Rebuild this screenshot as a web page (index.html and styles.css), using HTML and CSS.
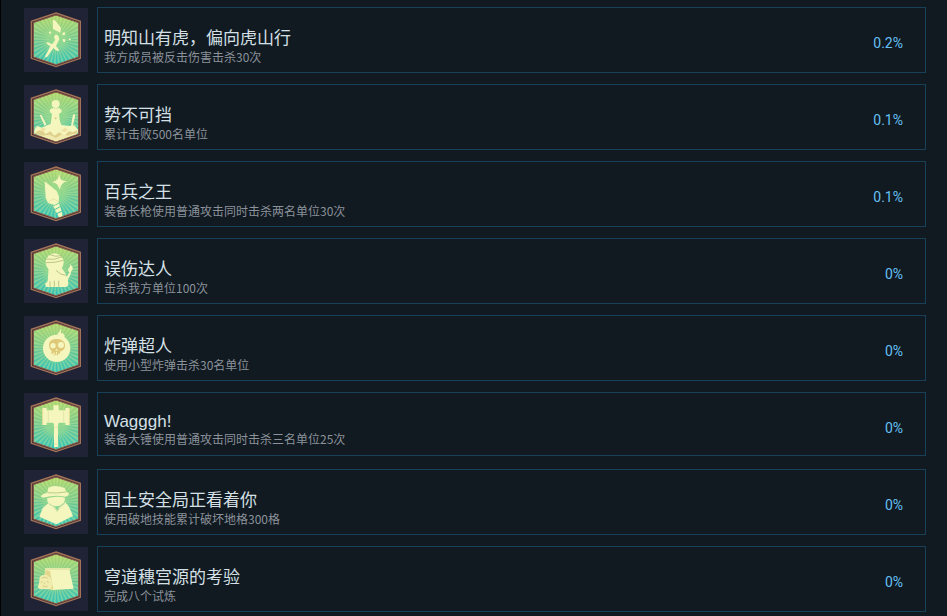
FILE: index.html
```
<!DOCTYPE html>
<html lang="zh-CN">
<head>
  <meta charset="UTF-8">
  <meta name="viewport" content="width=device-width, initial-scale=1.0">
  <title>全球成就</title>
  <link rel="stylesheet" href="styles.css">
</head>
<body>
  <!-- shared badge background -->
  <svg class="defs" aria-hidden="true">
    <defs>
      <linearGradient id="sky" x1="0" y1="0" x2="0" y2="1">
        <stop offset="0" stop-color="#b4d868"/>
        <stop offset="0.5" stop-color="#70c893"/>
        <stop offset="1" stop-color="#2fc4bb"/>
      </linearGradient>
      <radialGradient id="glow">
        <stop offset="0" stop-color="#b4e88c" stop-opacity="0.7"/>
        <stop offset="1" stop-color="#b4e88c" stop-opacity="0"/>
      </radialGradient>
      <clipPath id="hex"><path d="M108 34L175 56V158L108 182L41 158V56Z"/></clipPath>
      <symbol id="badge" viewBox="12 12 192 192">
        <path d="M108 27L181 52V163L108 188L34 163V52Z" fill="#4a3033" stroke="#a37458" stroke-width="4"/>
        <g clip-path="url(#hex)">
          <rect x="38" y="30" width="140" height="156" fill="url(#sky)"/>
          <circle cx="108" cy="108" r="55" pathLength="72" fill="none" stroke="#d3ee9c" stroke-opacity="0.35" stroke-width="70" stroke-dasharray="1 1"/>
          <circle cx="108" cy="108" r="46" fill="url(#glow)"/>
        </g>
        <path d="M108 33L176 56V159L108 182L40 159V56Z" fill="none" stroke="#8d604b" stroke-width="3"/>
      </symbol>
    </defs>
  </svg>

  <main class="achievements">
    <div class="achieve-row">
      <svg class="achieve-icon" viewBox="12 12 192 192" aria-hidden="true">
        <use href="#badge" x="12" y="12" width="192" height="192"/>
        <g fill="#f5f6bd">
          <path d="M98 48L105 49L123 71L121 86L99 75Z"/>
          <path d="M107 91L115 95L118 106L108 126L117 137L115 142L108 139L100 132L82 158L75 161L77 153L91 127L80 119L81 114L88 116L96 121L106 108L102 99Z"/>
          <path d="M128 86L136 85L134 94L127 93ZM128 105L136 106L135 115L129 113ZM89 82L94 84L91 90L86 87ZM148 103L153 105L150 109L146 107Z"/>
        </g>
      </svg>
      <div class="achieve-box">
        <div class="achieve-text">
          <h3>明知山有虎，偏向虎山行</h3>
          <p>我方成员被反击伤害击杀30次</p>
        </div>
        <div class="achieve-percent">0.2%</div>
      </div>
    </div>

    <div class="achieve-row">
      <svg class="achieve-icon" viewBox="12 12 192 192" aria-hidden="true">
        <use href="#badge" x="12" y="12" width="192" height="192"/>
        <g fill="#f5f6bd">
          <circle cx="107" cy="69" r="12"/>
          <path d="M95 82H119L125 88L124 94L117 99L119 117L124 132L150 135L163 133L174 146L173 157L108 181L43 157L43 147L51 135L66 140L81 133L92 129L96 99L90 94L89 87Z"/>
          <path d="M59 102L64 101L79 130L74 134ZM159 101L164 99L165 107L158 136L153 134Z"/>
        </g>
        <path d="M44 157L56 148L70 151L77 159L91 151L103 164L118 154L133 164L147 150L158 154L171 148V158L108 180Z" fill="#dfd18d"/>
        <path d="M60 147L67 140L78 143L72 150ZM123 150L134 141L143 144L136 153Z" fill="#f0dfa0"/>
        <path d="M43 158L108 181L173 158L160 158L144 164L126 160L108 171L88 161L66 164Z" fill="#f1eaaf"/>
        <circle cx="107" cy="112" r="3" fill="#d5cf85"/>
      </svg>
      <div class="achieve-box">
        <div class="achieve-text">
          <h3>势不可挡</h3>
          <p>累计击败500名单位</p>
        </div>
        <div class="achieve-percent">0.1%</div>
      </div>
    </div>

    <div class="achieve-row">
      <svg class="achieve-icon" viewBox="12 12 192 192" aria-hidden="true">
        <use href="#badge" x="12" y="12" width="192" height="192"/>
        <g fill="#f5f6bd">
          <path d="M117 44Q119 61 124 65Q130 69 141 70Q131 72 127 77Q122 82 119 95Q115 84 111 79Q106 74 96 73Q109 68 112 64Q116 59 117 44Z"/>
          <path d="M74 70L110 99L117 116L116 134L103 141L84 135L77 119Z"/>
          <path d="M100 145L117 137L120 145L104 153ZM105 156L121 148L124 158L110 165ZM112 168L125 161L127 175L117 178Z"/>
        </g>
        <path d="M86 132L99 122L115 130" fill="none" stroke="#dadc92" stroke-width="2"/>
      </svg>
      <div class="achieve-box">
        <div class="achieve-text">
          <h3>百兵之王</h3>
          <p>装备长枪使用普通攻击同时击杀两名单位30次</p>
        </div>
        <div class="achieve-percent">0.1%</div>
      </div>
    </div>

    <div class="achieve-row">
      <svg class="achieve-icon" viewBox="12 12 192 192" aria-hidden="true">
        <use href="#badge" x="12" y="12" width="192" height="192"/>
        <g fill="#f5f6bd">
          <circle cx="104" cy="82" r="27"/>
          <path d="M86 99L125 99L136 115L144 134L145 151L138 156H78L75 147L83 139Z"/>
          <path d="M137 132L148 112L143 104L149 96L151 88L156 94L159 101L153 110L152 118L142 137Z"/>
        </g>
        <g fill="none" stroke="#9aaf69" stroke-width="2">
          <path d="M79 72Q103 77 127 65M78 83Q104 84 130 76M89 59Q106 67 124 62"/>
          <path d="M108 106Q121 121 139 121"/>
          <path d="M90 139V155M103 137V155M116 137V155"/>
        </g>
      </svg>
      <div class="achieve-box">
        <div class="achieve-text">
          <h3>误伤达人</h3>
          <p>击杀我方单位100次</p>
        </div>
        <div class="achieve-percent">0%</div>
      </div>
    </div>

    <div class="achieve-row">
      <svg class="achieve-icon" viewBox="12 12 192 192" aria-hidden="true">
        <use href="#badge" x="12" y="12" width="192" height="192"/>
        <circle cx="110" cy="109" r="41" fill="#f5f6bd"/>
        <path d="M113 67L115 61L131 65L134 72L132 80L112 74Z" fill="#f5f6bd"/>
        <path d="M122 65L120 58L124 53" fill="none" stroke="#f5f6bd" stroke-width="4"/>
        <path d="M87 96Q89 82 107 81Q128 80 134 94Q138 105 130 114L120 119V126L115 124L113 131L108 127L103 132L100 124L94 126L95 117Q86 110 87 96Z" fill="#dfc878"/>
        <circle cx="99" cy="101" r="8" fill="#f5f6bd"/>
        <circle cx="123" cy="99" r="9" fill="#f5f6bd"/>
        <path d="M110 110L114 116H106ZM101 121H104V128H101ZM108 120H111V126H108Z" fill="#f5f6bd"/>
      </svg>
      <div class="achieve-box">
        <div class="achieve-text">
          <h3>炸弹超人</h3>
          <p>使用小型炸弹击杀30名单位</p>
        </div>
        <div class="achieve-percent">0%</div>
      </div>
    </div>

    <div class="achieve-row">
      <svg class="achieve-icon" viewBox="12 12 192 192" aria-hidden="true">
        <use href="#badge" x="12" y="12" width="192" height="192"/>
        <g fill="#f5f6bd">
          <path d="M67 57H80V108H67ZM136 57H149V108H136ZM80 64H136V101H80Z"/>
          <path d="M100 49H116V104H100ZM102 104H114V174H102Z"/>
        </g>
        <path d="M85 66V99M131 66V99M102 115H114M102 165H114" stroke="#dbdda0" stroke-width="2"/>
        <path d="M68 58V107M148 58V107" stroke="#e3d994" stroke-width="2"/>
      </svg>
      <div class="achieve-box">
        <div class="achieve-text">
          <h3 class="latin">Wagggh!</h3>
          <p>装备大锤使用普通攻击同时击杀三名单位25次</p>
        </div>
        <div class="achieve-percent">0%</div>
      </div>
    </div>

    <div class="achieve-row">
      <svg class="achieve-icon" viewBox="12 12 192 192" aria-hidden="true">
        <use href="#badge" x="12" y="12" width="192" height="192"/>
        <g fill="#f5f6bd">
          <path d="M82 80L85 65Q103 54 134 66L139 78L147 82Q147 90 136 92Q103 85 70 95L62 92Q65 83 82 80Z"/>
          <path d="M81 97Q108 88 135 95L133 109L120 119L107 121L92 117L83 108Z"/>
          <path d="M86 111L104 122L112 134L117 124L136 109L147 122L159 150L109 175L58 152L68 126Z"/>
        </g>
        <path d="M83 80Q108 83 138 78" fill="none" stroke="#b8cf82" stroke-width="3"/>
        <path d="M87 113L102 123L112 136L119 124L135 112" fill="none" stroke="#a6d08c" stroke-width="2"/>
      </svg>
      <div class="achieve-box">
        <div class="achieve-text">
          <h3>国土安全局正看着你</h3>
          <p>使用破地技能累计破坏地格300格</p>
        </div>
        <div class="achieve-percent">0%</div>
      </div>
    </div>

    <div class="achieve-row">
      <svg class="achieve-icon" viewBox="12 12 192 192" aria-hidden="true">
        <use href="#badge" x="12" y="12" width="192" height="192"/>
        <path d="M75 76H152L149 85L161 137L95 141L74 98Z" fill="#f5f6bd"/>
        <path d="M76 81L90 84L100 138L90 140Q96 117 75 97Z" fill="#e3d78e"/>
        <path d="M59 102Q75 87 91 104Q101 122 92 139L58 138L53 131L57 123Z" fill="#f0edae"/>
        <path d="M65 106Q75 98 84 106M62 119L68 115M80 114L86 120M68 129Q75 134 83 129M73 119V124" fill="none" stroke="#c8b86b" stroke-width="2"/>
        <path d="M75 79H151" stroke="#dfd892" stroke-width="2"/>
      </svg>
      <div class="achieve-box">
        <div class="achieve-text">
          <h3>穹道穗宫源的考验</h3>
          <p>完成八个试炼</p>
        </div>
        <div class="achieve-percent">0%</div>
      </div>
    </div>
  </main>
</body>
</html>
```
FILE: styles.css
```
* {
  box-sizing: border-box;
}
body {
  margin: 0;
  background-color: #111921;
  color: #d5e0e6;
  font-family: "Liberation Sans", "Noto Sans CJK SC", sans-serif;
  border-left: 1px solid #000;
}
.defs {
  position: absolute;
  width: 0;
  height: 0;
}
.achievements {
  padding: 7px 21px 4px 23px;
}
.achieve-row {
  display: flex;
  align-items: flex-start;
  gap: 9px;
  min-height: 66px;
}
.achieve-row + .achieve-row {
  margin-top: 11px;
}
.achieve-icon {
  display: block;
  flex: none;
  width: 64px;
  height: 64px;
  margin-top: 1px;
  background-color: #202235;
}
.achieve-box {
  flex: 1;
  display: flex;
  justify-content: space-between;
  min-height: 64px;
  border: 1px solid #184159;
  padding: 20px 22px 8px 6px;
}
.achieve-text h3 {
  margin: 0;
  font-size: 17px;
  font-weight: normal;
  line-height: 21px;
}
.achieve-text h3.latin {
  line-height: 18px;
}
.achieve-text p {
  margin: 0;
  color: #8b929a;
  font-family: "Noto Sans CJK SC", sans-serif;
  font-size: 12px;
  line-height: 15px;
}
.achieve-percent {
  color: #66c0f4;
  font-family: Roboto, sans-serif;
  font-size: 14px;
  line-height: 30px;
}
```
